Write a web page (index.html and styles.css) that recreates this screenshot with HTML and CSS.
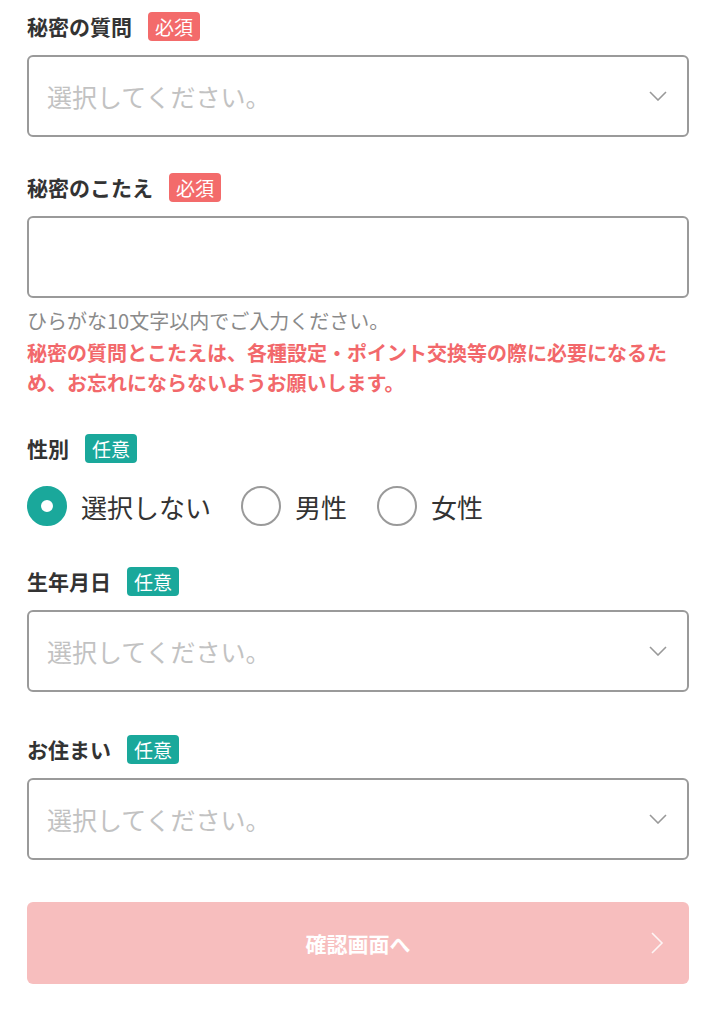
FILE: index.html
```html
<!DOCTYPE html>
<html lang="ja">
<head>
  <meta charset="UTF-8">
  <meta name="viewport" content="width=device-width, initial-scale=1.0">
  <title>会員登録</title>
  <link rel="stylesheet" href="styles.css">
</head>
<body>
  <form class="form">
    <div class="field">
      <div class="label">秘密の質問<span class="badge req">必須</span></div>
      <div class="select">
        <span class="placeholder">選択してください。</span>
        <svg class="chev" width="18" height="10" viewBox="0 0 18 10"><path d="M1 1l8 8 8-8" fill="none" stroke="#999" stroke-width="1.6"/></svg>
      </div>
    </div>

    <div class="field">
      <div class="label">秘密のこたえ<span class="badge req">必須</span></div>
      <div class="input"></div>
      <p class="help">ひらがな10文字以内でご入力ください。</p>
      <p class="warn">秘密の質問とこたえは、各種設定・ポイント交換等の際に必要になるため、お忘れにならないようお願いします。</p>
    </div>

    <div class="field gender">
      <div class="label">性別<span class="badge opt">任意</span></div>
      <div class="radios">
        <label class="radio"><span class="dot on"></span>選択しない</label>
        <label class="radio"><span class="dot"></span>男性</label>
        <label class="radio"><span class="dot"></span>女性</label>
      </div>
    </div>

    <div class="field wide">
      <div class="label">生年月日<span class="badge opt">任意</span></div>
      <div class="select">
        <span class="placeholder">選択してください。</span>
        <svg class="chev" width="18" height="10" viewBox="0 0 18 10"><path d="M1 1l8 8 8-8" fill="none" stroke="#999" stroke-width="1.6"/></svg>
      </div>
    </div>

    <div class="field wide">
      <div class="label">お住まい<span class="badge opt">任意</span></div>
      <div class="select">
        <span class="placeholder">選択してください。</span>
        <svg class="chev" width="18" height="10" viewBox="0 0 18 10"><path d="M1 1l8 8 8-8" fill="none" stroke="#999" stroke-width="1.6"/></svg>
      </div>
    </div>

    <button type="button" class="submit">
      確認画面へ
      <svg class="arrow" width="14" height="22" viewBox="0 0 14 22"><path d="M2 1l10 10-10 10" fill="none" stroke="#fff" stroke-width="1.6"/></svg>
    </button>
  </form>
</body>
</html>
```

FILE: styles.css
```css
body {
  margin: 0;
  padding: 0;
  background: #fff;
  font-family: "Noto Sans CJK JP", "Noto Sans", sans-serif;
  color: #333;
}
.form {
  padding: 11px 27px 0;
}
.field {
  margin-bottom: 35px;
}
.field.gender {
  margin-bottom: 40px;
}
.field.wide {
  margin-bottom: 42px;
}
.label {
  display: flex;
  align-items: center;
  height: 30px;
  font-size: 21px;
  font-weight: 700;
  margin-bottom: 14px;
}
.badge {
  display: inline-block;
  margin-left: 16px;
  padding: 0 7px;
  height: 29px;
  line-height: 29px;
  border-radius: 4px;
  font-size: 19px;
  font-weight: 400;
  color: #fff;
}
.badge.req {
  background: #f36b6b;
}
.badge.opt {
  background: #1aa89b;
}
.select, .input {
  box-sizing: border-box;
  height: 82px;
  border: 2px solid #9a9a9a;
  border-radius: 6px;
  display: flex;
  align-items: center;
  justify-content: space-between;
  padding: 0 20px 0 18px;
}
.placeholder {
  font-size: 25px;
  color: #c2c2c2;
}
.help {
  margin: 8px 0 0;
  font-size: 20px;
  line-height: 30px;
  color: #8a8a8a;
}
.warn {
  margin: 2px 0 0;
  font-size: 20px;
  line-height: 30px;
  font-weight: 700;
  color: #f2686b;
}
.radios {
  display: flex;
  align-items: center;
  margin-top: 23px;
}
.radio {
  display: flex;
  align-items: center;
  font-size: 26px;
  margin-right: 30px;
}
.dot {
  box-sizing: border-box;
  width: 40px;
  height: 40px;
  border-radius: 50%;
  border: 2px solid #9a9a9a;
  margin-right: 14px;
}
.dot.on {
  border: 14px solid #1aa89b;
}
.submit {
  position: relative;
  width: 100%;
  height: 82px;
  border: none;
  border-radius: 6px;
  background: #f7bebe;
  color: #fff;
  font-family: inherit;
  font-size: 21px;
  font-weight: 700;
}
.arrow {
  position: absolute;
  right: 25px;
  top: 30px;
  opacity: 0.85;
}
```
